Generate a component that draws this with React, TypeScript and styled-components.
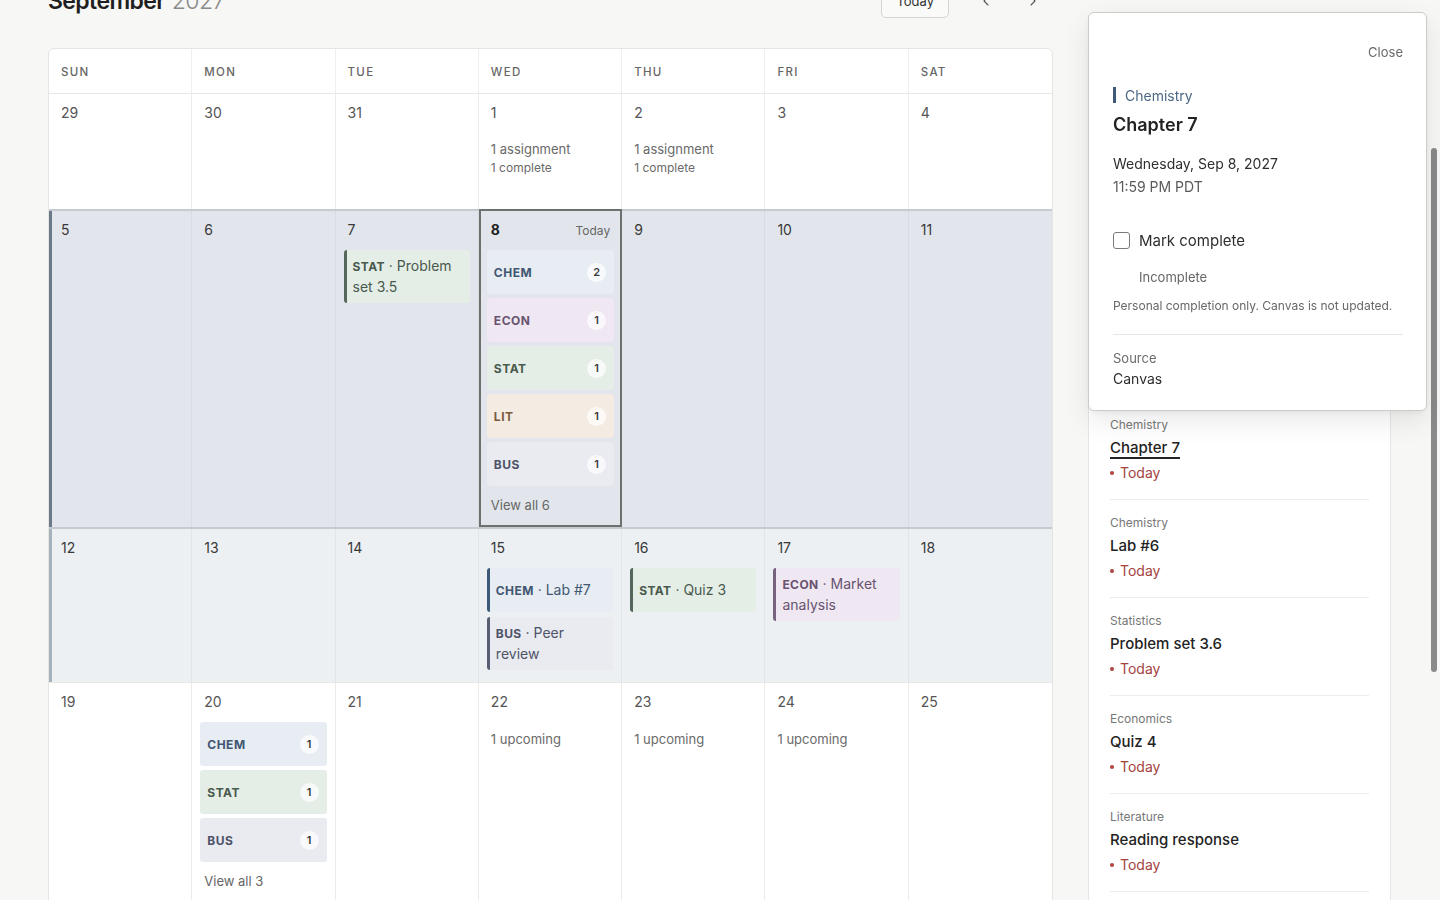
import React from "react";
import styled, { createGlobalStyle, css } from "styled-components";
import { ChevronLeft, ChevronRight } from "lucide-react";

const GlobalStyle = createGlobalStyle`
  * { box-sizing: border-box; }
  html, body {
    margin: 0;
    padding: 0;
    overflow: hidden;
    background: #f7f7f5;
  }
  body {
    font-family: Inter, "Noto Sans", "Liberation Sans", sans-serif;
    color: #2b2b2b;
    -webkit-font-smoothing: antialiased;
  }
  button { font-family: inherit; }
`;

// --- course colours ---

type Course = "CHEM" | "ECON" | "STAT" | "LIT" | "BUS";

const palette: Record<Course, { bg: string; fg: string; bar: string }> = {
  CHEM: { bg: "#e8edf4", fg: "#415772", bar: "#3f5a78" },
  ECON: { bg: "#efe8f3", fg: "#69536f", bar: "#77627f" },
  STAT: { bg: "#e5ede7", fg: "#485a4d", bar: "#55675a" },
  LIT: { bg: "#f4ebe2", fg: "#7b5b40", bar: "#8a6a4c" },
  BUS: { bg: "#e9ebf1", fg: "#4e5368", bar: "#575d73" },
};

type Tone = "plain" | "current" | "next";

const toneBg: Record<Tone, string> = {
  plain: "#ffffff",
  current: "#e2e6ec",
  next: "#edf0f3",
};

// --- layout ---

const Page = styled.div`
  display: grid;
  grid-template-columns: 1005px 303px;
  column-gap: 35px;
  row-gap: 29px;
  padding-left: 48px;
  margin-top: -17px;
`;

const Header = styled.header`
  grid-column: 1;
  height: 36px;
  display: flex;
  align-items: center;
  justify-content: space-between;
`;

const Title = styled.h1`
  margin: 0;
  font-size: 23px;
  line-height: 32px;
  font-weight: 600;
  letter-spacing: -0.6px;
  color: #1f1f1f;

  span {
    font-weight: 300;
    color: #8a8a8a;
    margin-left: 7px;
  }
`;

const Controls = styled.div`
  display: flex;
  align-items: center;
  gap: 7px;
`;

const TodayButton = styled.button`
  height: 34px;
  padding: 0 14px;
  margin-right: 10px;
  border: 1px solid #d5d5d2;
  border-radius: 5px;
  background: #fafaf8;
  font-size: 13px;
  color: #333;
`;

const NavButton = styled.button`
  width: 40px;
  height: 34px;
  display: flex;
  align-items: center;
  justify-content: center;
  border: none;
  background: transparent;
  color: #555;
  padding: 0;
`;

// --- calendar ---

const Calendar = styled.section`
  grid-column: 1;
  background: #fff;
  border: 1px solid #e5e5e2;
  border-radius: 6px 6px 0 0;
  overflow: hidden;
`;

const DayHeads = styled.div`
  display: grid;
  grid-template-columns: repeat(7, 1fr);
  height: 44px;
`;

const DayHead = styled.div`
  display: flex;
  align-items: center;
  padding: 1px 0 0 12px;
  font-size: 11.5px;
  font-weight: 500;
  letter-spacing: 1.3px;
  color: #666;
  border-right: 1px solid #efefec;

  &:last-child { border-right: none; }
`;

const Week = styled.div<{ $tone: Tone; $height: number }>`
  display: grid;
  grid-template-columns: repeat(7, 1fr);
  min-height: ${(p) => p.$height}px;
  background: ${(p) => toneBg[p.$tone]};
  border-top: 1px solid #e8e8e5;

  ${(p) =>
    p.$tone === "current" &&
    css`
      border-top: 2px solid #c6cbd1;
      box-shadow: inset 3px 0 0 #6b7989;
    `}
  ${(p) =>
    p.$tone === "next" &&
    css`
      border-top: 2px solid #c6cad0;
      box-shadow: inset 3px 0 0 #a7b1bc;
    `}
`;

const Cell = styled.div<{ $tone: Tone; $today?: boolean }>`
  display: flex;
  flex-direction: column;
  padding: 11px 8px 12px;
  border-right: 1px solid
    ${(p) => (p.$tone === "plain" ? "#ebebe8" : p.$tone === "current" ? "#d8dce2" : "#e1e4e8")};

  &:last-child { border-right: none; }

  ${(p) =>
    p.$today &&
    css`
      border: 2px solid #6c716d;
      margin-top: -2px;
      padding: 11px 6px 10px;
    `}
`;

const CellTop = styled.div`
  display: flex;
  align-items: center;
  justify-content: space-between;
  padding: 0 4px;
  height: 16px;
`;

const DayNum = styled.span<{ $tone: Tone; $bold?: boolean }>`
  font-size: 14px;
  line-height: 16px;
  color: ${(p) => (p.$bold ? "#1f1f1f" : p.$tone === "plain" ? "#555" : "#383838")};
  font-weight: ${(p) => (p.$bold ? 700 : 400)};
`;

const TodayTag = styled.span`
  font-size: 12px;
  color: #666;
`;

const Summary = styled.div`
  margin-top: 19px;
  padding: 0 4px;
  color: #6a6a6a;

  div:first-child { font-size: 13px; line-height: 19px; }
  div:last-child { font-size: 12px; line-height: 18px; }
`;

const Upcoming = styled.div`
  margin-top: 19px;
  padding: 0 4px;
  font-size: 13px;
  line-height: 20px;
  color: #6a6a6a;
`;

const Stack = styled.div`
  margin-top: 12px;
  display: flex;
  flex-direction: column;
  gap: 4px;
`;

const EventCard = styled.div<{ $c: Course }>`
  min-height: 44px;
  display: flex;
  align-items: center;
  padding: 6px 8px 6px 6px;
  border-left: 3px solid ${(p) => palette[p.$c].bar};
  border-radius: 3px;
  background: ${(p) => palette[p.$c].bg};
  color: ${(p) => palette[p.$c].fg};
  font-size: 14px;
  line-height: 20px;

  & + & { margin-top: 1px; }

  b {
    font-size: 12px;
    font-weight: 700;
    letter-spacing: 0.4px;
  }
`;

const CourseChip = styled.div<{ $c: Course }>`
  height: 44px;
  display: flex;
  align-items: center;
  justify-content: space-between;
  padding: 0 8px 0 7px;
  border-radius: 3px;
  background: ${(p) => palette[p.$c].bg};
  color: ${(p) => palette[p.$c].fg};
  font-size: 12px;
  font-weight: 700;
  letter-spacing: 0.5px;
`;

const Count = styled.span`
  width: 19px;
  height: 19px;
  border-radius: 50%;
  display: flex;
  align-items: center;
  justify-content: center;
  background: rgba(255, 255, 255, 0.7);
  color: #3a3a3a;
  font-size: 11px;
  font-weight: 600;
  letter-spacing: 0;
`;

const ViewAll = styled.div`
  margin-top: 10px;
  padding: 0 4px;
  font-size: 13px;
  line-height: 18px;
  color: #666;
`;

// --- sidebar ---

const Aside = styled.aside`
  grid-column: 2;
  position: relative;
  min-height: 900px;
  background: #fff;
  border: 1px solid #e6e6e3;
  border-radius: 6px 6px 0 0;
  padding: 0 21px;
`;

const AsideIntro = styled.div`
  height: 255px;
  padding-top: 22px;
  border-bottom: 1px solid #ececea;

  h3 { margin: 0; font-size: 15px; font-weight: 600; color: #222; }
  p { margin: 6px 0 0; font-size: 13px; color: #777; }
`;

const DueItem = styled.div`
  padding: 15px 0 16px;
  border-bottom: 1px solid #ececea;
`;

const DueCourse = styled.div`
  font-size: 12px;
  line-height: 16px;
  color: #777;
`;

const DueTitle = styled.div<{ $active?: boolean }>`
  margin-top: 4px;
  font-size: 15px;
  line-height: 22px;
  font-weight: 500;
  color: #232323;

  ${(p) =>
    p.$active &&
    css`
      text-decoration: underline;
      text-decoration-thickness: 1.5px;
      text-underline-offset: 4px;
    `}
`;

const DueWhen = styled.div`
  margin-top: 4px;
  display: flex;
  align-items: center;
  gap: 6px;
  font-size: 14px;
  line-height: 20px;
  color: #a4433e;

  &::before {
    content: "";
    width: 4px;
    height: 4px;
    border-radius: 50%;
    background: #b0443e;
  }
`;

const Popover = styled.div`
  position: absolute;
  top: -37px;
  left: -1px;
  width: 339px;
  z-index: 2;
  padding: 23px 23px 21px 24px;
  background: #fff;
  border: 1px solid #cbcbc8;
  border-radius: 6px;
  box-shadow: 0 10px 28px rgba(0, 0, 0, 0.09), 0 2px 6px rgba(0, 0, 0, 0.05);
`;

const CloseRow = styled.div`
  display: flex;
  justify-content: flex-end;
`;

const CloseButton = styled.button`
  height: 32px;
  padding: 0;
  border: none;
  background: transparent;
  font-size: 13px;
  color: #6a6a6a;
`;

const CourseTag = styled.div`
  margin-top: 18px;
  height: 18px;
  display: flex;
  align-items: center;
  gap: 9px;
  font-size: 14px;
  color: #4e6885;

  &::before {
    content: "";
    width: 3px;
    height: 16px;
    background: #3f5a78;
  }
`;

const PopTitle = styled.h2`
  margin: 9px 0 0;
  font-size: 18px;
  line-height: 24px;
  font-weight: 600;
  color: #222;
`;

const DueDate = styled.div`
  margin-top: 17px;
  font-size: 14px;
  line-height: 20px;
  color: #2e2e2e;

  div + div { margin-top: 3px; color: #5a5a5a; }
`;

const CheckRow = styled.label`
  margin-top: 32px;
  height: 22px;
  display: flex;
  align-items: center;
  gap: 9px;
  font-size: 15px;
  color: #2e2e2e;
`;

const Box = styled.span`
  width: 17px;
  height: 17px;
  border: 1.5px solid #7a7a7a;
  border-radius: 3px;
  background: #fff;
`;

const Status = styled.div`
  margin: 17px 0 0 26px;
  font-size: 13px;
  line-height: 18px;
  color: #666;
`;

const Note = styled.div`
  margin-top: 12px;
  font-size: 12px;
  line-height: 16px;
  color: #676767;
  white-space: nowrap;
`;

const Rule = styled.hr`
  margin: 20px 0 0;
  border: none;
  height: 1px;
  background: #e6e6e3;
`;

const Meta = styled.div`
  margin-top: 14px;

  div:first-child { font-size: 13px; line-height: 18px; color: #6b6b6b; }
  div:last-child { margin-top: 2px; font-size: 14px; line-height: 20px; color: #2e2e2e; }
`;

const ScrollThumb = styled.div`
  position: fixed;
  top: 148px;
  right: 3px;
  width: 6px;
  height: 524px;
  border-radius: 3px;
  background: #8a8a8a;
`;

// --- data ---

type DayData = {
  n: number;
  today?: boolean;
  summary?: boolean;
  upcoming?: number;
  events?: { c: Course; title: string }[];
  chips?: { c: Course; count: number }[];
  viewAll?: number;
};

const weeks: { tone: Tone; height: number; days: DayData[] }[] = [
  {
    tone: "plain",
    height: 116,
    days: [{ n: 29 }, { n: 30 }, { n: 31 }, { n: 1, summary: true }, { n: 2, summary: true }, { n: 3 }, { n: 4 }],
  },
  {
    tone: "current",
    height: 318,
    days: [
      { n: 5 },
      { n: 6 },
      { n: 7, events: [{ c: "STAT", title: "Problem set 3.5" }] },
      {
        n: 8,
        today: true,
        chips: [
          { c: "CHEM", count: 2 },
          { c: "ECON", count: 1 },
          { c: "STAT", count: 1 },
          { c: "LIT", count: 1 },
          { c: "BUS", count: 1 },
        ],
        viewAll: 6,
      },
      { n: 9 },
      { n: 10 },
      { n: 11 },
    ],
  },
  {
    tone: "next",
    height: 155,
    days: [
      { n: 12 },
      { n: 13 },
      { n: 14 },
      { n: 15, events: [{ c: "CHEM", title: "Lab #7" }, { c: "BUS", title: "Peer review" }] },
      { n: 16, events: [{ c: "STAT", title: "Quiz 3" }] },
      { n: 17, events: [{ c: "ECON", title: "Market analysis" }] },
      { n: 18 },
    ],
  },
  {
    tone: "plain",
    height: 240,
    days: [
      { n: 19 },
      {
        n: 20,
        chips: [
          { c: "CHEM", count: 1 },
          { c: "STAT", count: 1 },
          { c: "BUS", count: 1 },
        ],
        viewAll: 3,
      },
      { n: 21 },
      { n: 22, upcoming: 1 },
      { n: 23, upcoming: 1 },
      { n: 24, upcoming: 1 },
      { n: 25 },
    ],
  },
];

const dueList = [
  { course: "Statistics", title: "Problem set 3.5", when: "Yesterday" },
  { course: "Chemistry", title: "Chapter 7", when: "Today", active: true },
  { course: "Chemistry", title: "Lab #6", when: "Today" },
  { course: "Statistics", title: "Problem set 3.6", when: "Today" },
  { course: "Economics", title: "Quiz 4", when: "Today" },
  { course: "Literature", title: "Reading response", when: "Today" },
  { course: "Business", title: "Case notes", when: "Today" },
];

const DayCell = ({ day, tone }: { day: DayData; tone: Tone }) => (
  <Cell $tone={tone} $today={day.today}>
    <CellTop>
      <DayNum $tone={tone} $bold={day.today}>
        {day.n}
      </DayNum>
      {day.today && <TodayTag>Today</TodayTag>}
    </CellTop>

    {day.summary && (
      <Summary>
        <div>1 assignment</div>
        <div>1 complete</div>
      </Summary>
    )}

    {day.upcoming && <Upcoming>{day.upcoming} upcoming</Upcoming>}

    {day.events && (
      <Stack>
        {day.events.map((e) => (
          <EventCard key={e.title} $c={e.c}>
            <span>
              <b>{e.c}</b> · {e.title}
            </span>
          </EventCard>
        ))}
      </Stack>
    )}

    {day.chips && (
      <Stack>
        {day.chips.map((chip) => (
          <CourseChip key={chip.c} $c={chip.c}>
            {chip.c}
            <Count>{chip.count}</Count>
          </CourseChip>
        ))}
      </Stack>
    )}

    {day.viewAll && <ViewAll>View all {day.viewAll}</ViewAll>}
  </Cell>
);

const App = () => {
  return (
    <>
      <GlobalStyle />
      <Page>
        <Header>
          <Title>
            September<span>2027</span>
          </Title>
          <Controls>
            <TodayButton>Today</TodayButton>
            <NavButton aria-label="Previous month">
              <ChevronLeft size={16} strokeWidth={1.6} />
            </NavButton>
            <NavButton aria-label="Next month">
              <ChevronRight size={16} strokeWidth={1.6} />
            </NavButton>
          </Controls>
        </Header>

        <Calendar>
          <DayHeads>
            {["SUN", "MON", "TUE", "WED", "THU", "FRI", "SAT"].map((d) => (
              <DayHead key={d}>{d}</DayHead>
            ))}
          </DayHeads>
          {weeks.map((w, i) => (
            <Week key={i} $tone={w.tone} $height={w.height}>
              {w.days.map((d) => (
                <DayCell key={d.n} day={d} tone={w.tone} />
              ))}
            </Week>
          ))}
        </Calendar>

        <Aside>
          <AsideIntro>
            <h3>Due today</h3>
            <p>Wednesday, Sep 8 · 6 assignments</p>
          </AsideIntro>
          {dueList.map((item) => (
            <DueItem key={item.title}>
              <DueCourse>{item.course}</DueCourse>
              <DueTitle $active={item.active}>{item.title}</DueTitle>
              <DueWhen>{item.when}</DueWhen>
            </DueItem>
          ))}

          <Popover role="dialog">
            <CloseRow>
              <CloseButton>Close</CloseButton>
            </CloseRow>
            <CourseTag>Chemistry</CourseTag>
            <PopTitle>Chapter 7</PopTitle>
            <DueDate>
              <div>Wednesday, Sep 8, 2027</div>
              <div>11:59 PM PDT</div>
            </DueDate>
            <CheckRow>
              <Box />
              Mark complete
            </CheckRow>
            <Status>Incomplete</Status>
            <Note>Personal completion only. Canvas is not updated.</Note>
            <Rule />
            <Meta>
              <div>Source</div>
              <div>Canvas</div>
            </Meta>
          </Popover>
        </Aside>
      </Page>
      <ScrollThumb />
    </>
  );
};

export default App;
